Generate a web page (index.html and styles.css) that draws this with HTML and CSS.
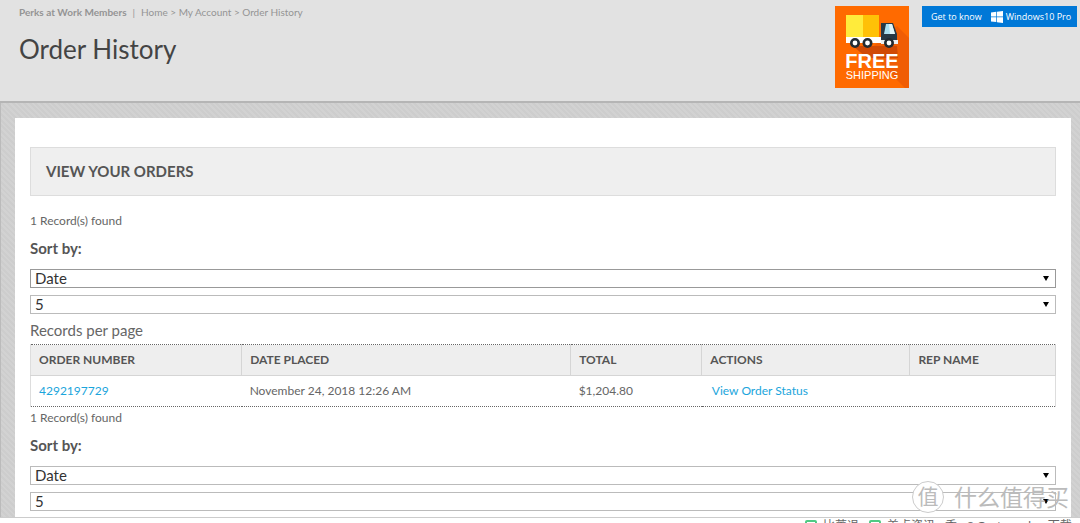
FILE: index.html
```html
<!DOCTYPE html>
<html lang="en">
<head>
<meta charset="utf-8">
<title>Order History</title>
<link rel="stylesheet" href="styles.css">
</head>
<body>
<div class="page">
  <header class="header">
    <div class="heading">
      <nav class="crumbs"><strong>Perks at Work Members</strong><span class="bar">|</span><span>Home &gt; My Account &gt; Order History</span></nav>
      <h1>Order History</h1>
    </div>
    <div class="promos">
      <svg class="shipping" viewBox="0 0 74 82" role="img" aria-label="Free shipping">
        <rect width="74" height="82" fill="#ff6a00"/>
        <path d="M62 20 74 32V82H70L56 68 34 44Z" fill="#f05d04"/>
        <path d="M18 40H62L63 52H32Z" fill="#d04a05"/>
        <path d="M11 9H28V31H11Z" fill="#ffeb3b"/>
        <path d="M28 9H44V31H28Z" fill="#ffc107"/>
        <path d="M11 31H46V37H11Z" fill="#fff"/>
        <path d="M46 17H58L62 28V35H46Z" fill="#263845"/>
        <path d="M51 18H57L60 28H49Z" fill="#a9dff0"/>
        <path d="M54 18H57L60 28H55Z" fill="#e1f5fa"/>
        <path d="M46 34H63V38H46Z" fill="#eceff1"/>
        <g fill="#fff" stroke="#222b32" stroke-width="2.6"><circle cx="20" cy="37" r="3.7"/><circle cx="32.5" cy="37" r="3.7"/><circle cx="54" cy="37" r="3.7"/></g>
        <text x="37" y="62" text-anchor="middle" class="free">FREE</text>
        <text x="37" y="73" text-anchor="middle" class="ship">SHIPPING</text>
      </svg>
      <a class="windows" href="#"><span>Get to know</span>
        <svg class="winlogo" viewBox="0 0 12 12" aria-hidden="true"><path d="M0 1.5 5.3.8V5.6H0ZM6 .7 12 0V5.6H6ZM0 6.3H5.3V11L0 10.4ZM6 6.3H12V12L6 11.2Z" fill="#fff"/></svg>
        <span>Windows10 Pro</span></a>
    </div>
  </header>
  <main class="backdrop">
    <div class="sheet">
      <h2>VIEW YOUR ORDERS</h2>
      <section class="filter">
        <p>1 Record(s) found</p>
        <label class="sort" for="sort1">Sort by:</label>
        <div class="pick dark"><select id="sort1"><option>Date</option></select></div>
        <div class="pick"><select id="count1"><option>5</option></select></div>
        <label class="per" for="count1">Records per page</label>
      </section>
      <table>
        <colgroup><col class="c1"><col class="c2"><col class="c3"><col class="c4"><col></colgroup>
        <thead><tr><th>ORDER NUMBER</th><th>DATE PLACED</th><th>TOTAL</th><th>ACTIONS</th><th>REP NAME</th></tr></thead>
        <tbody><tr><td><a href="#">4292197729</a></td><td>November 24, 2018 12:26 AM</td><td>$1,204.80</td><td class="action"><a href="#">View Order Status</a></td><td></td></tr></tbody>
      </table>
      <section class="filter lower">
        <p>1 Record(s) found</p>
        <label class="sort" for="sort2">Sort by:</label>
        <div class="pick"><select id="sort2"><option>Date</option></select></div>
        <div class="pick"><select id="count2" aria-label="Records per page"><option>5</option></select></div>
      </section>
    </div>
  </main>
  <footer class="status">
    <span class="item"><i class="box"></i>比菁退</span>
    <span class="item"><i class="box"></i>美点资讯</span>
    <span>香</span><span>8 Customedp</span><span>下载</span>
  </footer>
  <div class="mark"><span class="seal">值</span><span>什么值得买</span></div>
</div>
</body>
</html>
```
FILE: styles.css
```css
* { box-sizing: border-box; }
body { margin: 0; font-family: Lato, "Noto Sans CJK SC", sans-serif; color: #666; background: #fff; }
.page { position: relative; height: 100vh; overflow: hidden; display: flex; flex-direction: column; }
.header { display: flex; justify-content: space-between; background: #e2e2e2; padding: 5px 3px 13px 19px; border-bottom: 2px solid #b5b5b5; }
.crumbs { display: flex; gap: 6px; font-size: 10px; line-height: 14px; color: #949494; }
h1 { margin: 14px 0 0; font-size: 26px; line-height: 32px; font-weight: 400; color: #444; }
.promos { display: flex; align-items: flex-start; gap: 13px; padding-top: 1px; }
.shipping { display: block; width: 74px; height: 82px; }
.free { font: bold 20px "Liberation Sans", sans-serif; fill: #fff; }
.ship { font: 11px "Liberation Sans", sans-serif; fill: #fff; }
.windows { display: flex; align-items: center; width: 155px; height: 21px; padding-left: 9px; background: #0078d7; color: #fff; font: 9px "Open Sans", sans-serif; text-decoration: none; white-space: nowrap; }
.winlogo { flex: none; width: 12px; height: 12px; margin: 0 3px 0 9px; }
.backdrop { flex: 1; min-height: 0; padding: 15px 9px 0 14px; border-left: 1px solid #bbb; background: repeating-linear-gradient(45deg, #cdcdcd 0 2px, #d2d2d2 2px 4px); overflow: hidden; }
.sheet { background: #fff; height: 100%; padding: 29px 15px 0; }
h2 { margin: 0; padding: 13px 15px 14px; font-size: 15px; line-height: 20px; font-weight: 700; color: #555; background: #efefef; border: 1px solid #ddd; }
.filter { display: flex; flex-direction: column; padding-top: 15px; }
.filter p { margin: 0; font-size: 12px; line-height: 20px; }
.sort { margin: 8px 0 12px; font-size: 15px; line-height: 18px; font-weight: 700; color: #555; }
.pick { position: relative; margin-bottom: 7px; }
.pick::after { content: ""; position: absolute; right: 7px; top: 7px; border: 3px solid transparent; border-top: 5px solid #000; border-bottom: 0; }
select { display: block; width: 100%; height: 19px; padding: 0 4px; border: 1px solid #bbb; border-radius: 0; background: #fff; appearance: none; font: 15px/17px Lato, sans-serif; color: #333; }
.dark select { border-color: #999; }
.per { font-size: 15px; line-height: 18px; margin-bottom: 5px; }
table { width: 100%; table-layout: fixed; border-collapse: collapse; font-size: 12px; line-height: 16px; border: 1px solid #ddd; border-top: 1px dotted #666; border-bottom: 1px dotted #666; }
.c1 { width: 20.6%; } .c2 { width: 32.1%; } .c3 { width: 12.8%; } .c4 { width: 20.3%; }
th, td { height: 31px; padding: 0 8px; text-align: left; }
th { background: #eee; color: #555; border-right: 1px solid #d5d5d5; border-bottom: 1px solid #d5d5d5; }
.action { padding-left: 10px; }
td a { color: #1ba5dc; text-decoration: none; }
.lower { padding-top: 1px; }
.status { height: 6px; flex: none; padding-left: 805px; display: flex; gap: 10px; overflow: hidden; border-top: 1px solid #ccc; font-size: 12px; line-height: 16px; white-space: nowrap; }
.item { display: flex; gap: 6px; }
.box { width: 12px; height: 12px; margin-top: 2px; border: 2px solid #4fca83; border-radius: 2px; }
.mark { position: absolute; right: 11px; bottom: 10px; display: flex; align-items: center; gap: 10px; font-size: 23px; line-height: 32px; color: #bbb; }
.seal { width: 32px; height: 32px; border-radius: 50%; text-align: center; background: #fff; border: 1px solid #ccc; font-size: 21px; line-height: 28px; }
```
